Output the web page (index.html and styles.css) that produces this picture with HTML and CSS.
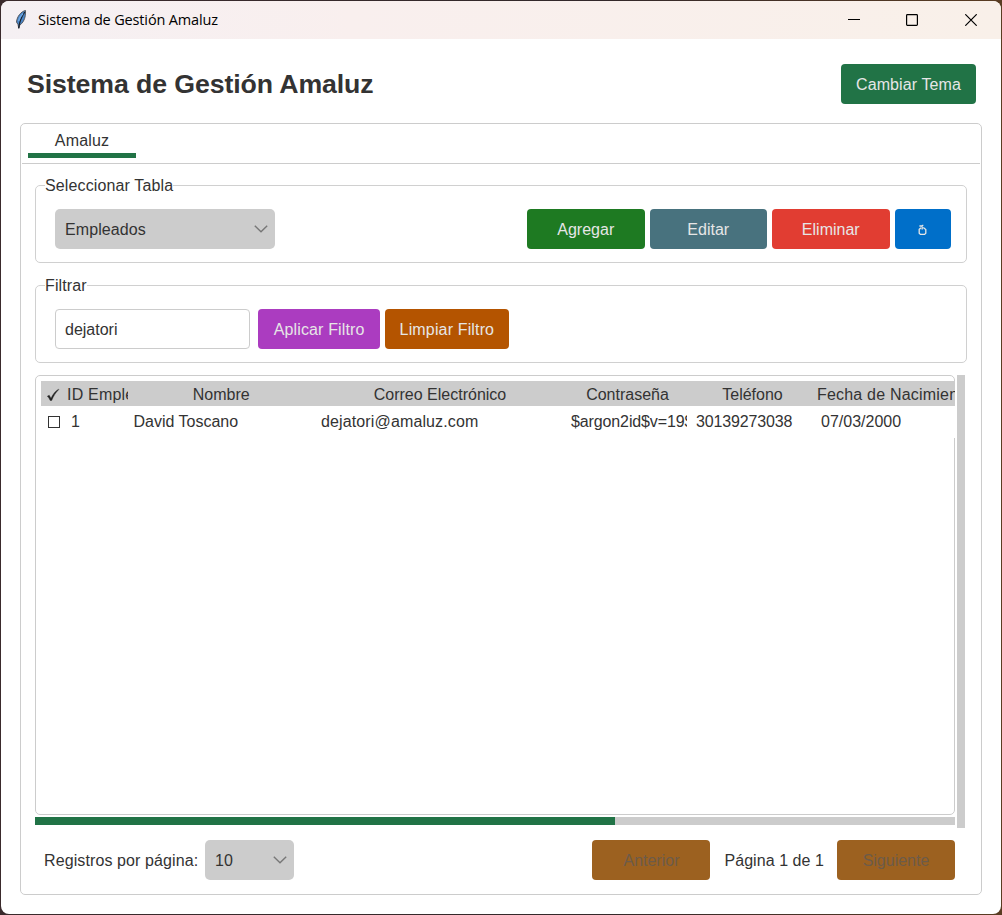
FILE: index.html
```html
<!DOCTYPE html>
<html lang="es">
<head>
<meta charset="utf-8">
<title>Sistema de Gestión Amaluz</title>
<link rel="stylesheet" href="styles.css">
</head>
<body>
<div class="window">
  <header class="titlebar">
    <svg class="feather" width="14" height="22" viewBox="0 0 14 22">
      <path d="M11.500 1.500C7 2.500 3 7.500 2.500 13L4 15.500L4.800 19.500L5.800 16C8.500 14.500 10.800 10.500 11.300 6.500Z" fill="#4a86c8" stroke="#55585f" stroke-width="1"/>
      <path d="M10.800 3C8 7 5.500 12 4.700 19" fill="none" stroke="#17202c" stroke-width="1.300"/>
      <path d="M9 4.500C7 6.500 5.300 9 4.500 12" fill="none" stroke="#6fa8e4" stroke-width="1.400"/>
    </svg>
    <span class="caption">Sistema de Gestión Amaluz</span>
    <div class="controls">
      <svg width="12" height="12" viewBox="0 0 12 12"><path d="M0 5.500H12"/></svg>
      <svg width="12" height="12" viewBox="0 0 12 12"><rect x=".6" y=".6" width="10.800" height="10.800" rx=".8"/></svg>
      <svg width="12" height="12" viewBox="0 0 12 12"><path d="M.3 .3L11.700 11.700M11.700 .3L.3 11.700"/></svg>
    </div>
  </header>

  <div class="heading">
    <h1>Sistema de Gestión Amaluz</h1>
    <button class="btn theme">Cambiar Tema</button>
  </div>

  <main class="notebook">
    <nav class="tabs"><span class="tab">Amaluz</span></nav>

    <section class="group">
      <span class="legend">Seleccionar Tabla</span>
      <div class="select table-select"><span>Empleados</span>
        <svg width="14" height="8" viewBox="0 0 14 8"><path d="M.8 .8L7 6.800L13.200 .8"/></svg>
      </div>
      <div class="actions">
        <button class="btn add">Agregar</button>
        <button class="btn edit">Editar</button>
        <button class="btn delete">Eliminar</button>
        <button class="btn refresh" aria-label="Recargar">
          <svg width="9" height="12" viewBox="0 0 9 12"><path d="M5.300 3.400L7.800 5.600V9.200L6.600 10.400H2.400L1.200 9.200V5.400L3 3.800M1.400 2H4.200V5.400M3.600 2L5.300 1.200"/></svg>
        </button>
      </div>
    </section>

    <section class="group filter">
      <span class="legend">Filtrar</span>
      <input class="search" type="text" value="dejatori">
      <button class="btn apply">Aplicar Filtro</button>
      <button class="btn clear">Limpiar Filtro</button>
    </section>

    <div class="table-area">
      <div class="tree">
        <div class="row head">
          <span class="check"><svg width="14" height="14" viewBox="0 0 14 14"><path d="M1.300 8.200L3.200 7.200L5 10.200C7 6 9.500 3 12.500 1.200L12.800 1.600C9.800 4.500 7.500 8 5.700 12.500H4.200C3.400 10.600 2.500 9.200 1.300 8.200Z" fill="#222" stroke="#222" stroke-width=".4"/></svg></span>
          <span class="clip-left">ID Empleado</span><span>Nombre</span><span>Correo Electrónico</span><span>Contraseña</span><span>Teléfono</span><span class="clip-left birth">Fecha de Nacimiento</span>
        </div>
        <div class="row body">
          <span class="check"><i class="box"></i></span>
          <span>1</span><span>David Toscano</span><span class="mail">dejatori@amaluz.com</span><span class="hash">$argon2id$v=19$</span><span class="phone">30139273038</span><span>07/03/2000</span>
        </div>
      </div>
      <div class="vscroll"></div>
      <div class="hscroll"><div class="thumb"></div></div>
    </div>

    <footer class="pager">
      <span class="per-page">Registros por página:</span>
      <div class="select size-select"><span>10</span>
        <svg width="14" height="8" viewBox="0 0 14 8"><path d="M.8 .8L7 6.800L13.200 .8"/></svg>
      </div>
      <button class="btn page" disabled>Anterior</button>
      <span class="page-no">Página 1 de 1</span>
      <button class="btn page" disabled>Siguiente</button>
    </footer>
  </main>
</div>
</body>
</html>
```
FILE: styles.css
```css
* { box-sizing: border-box; }
body {
  margin: 0;
  width: 1002px;
  height: 915px;
  padding: 1px;
  overflow: hidden;
  background: linear-gradient(90deg, #3a2a2c, #33282a 60%, #5a3c22);
  font: 16px/20px "Liberation Sans", Arial, sans-serif;
  color: #333;
}
.window {
  height: 913px;
  background: #fff;
  border-radius: 8px;
  overflow: hidden;
  display: flex;
  flex-direction: column;
}
.titlebar {
  height: 38px;
  flex: none;
  display: flex;
  align-items: center;
  padding: 0 24px 0 13px;
  background: linear-gradient(90deg, #f5f0f3, #f9efee 35%, #f9f0e9);
}
.feather { margin-top: -1px; }
.caption {
  margin-left: 10px;
  font: 14.500px/20px "Open Sans", "Noto Sans", sans-serif;
  letter-spacing: -.15px;
  color: #000;
}
.controls { margin-left: auto; display: flex; gap: 47px; }
.controls svg { fill: none; stroke: #000; stroke-width: 1.200; }
.controls svg:first-child { margin-right: -1px; }
.heading {
  display: flex;
  justify-content: space-between;
  align-items: center;
  padding: 25px 25px 19px 26px;
}
h1 { margin: 0; font-size: 26.700px; line-height: 40px; letter-spacing: -.1px; }
.btn {
  height: 40px;
  width: 117.500px;
  border: 0;
  padding: 2px 0 0;
  border-radius: 4px;
  font: inherit;
  color: #e6e6e6;
  display: flex;
  align-items: center;
  justify-content: center;
}
.theme { width: 135px; background: #217346; letter-spacing: .1px; }
.add { background: #1e7a22; }
.edit { background: #48727e; }
.delete { background: #e13d32; }
.refresh { width: 56.500px; background: #006fc9; }
.refresh svg { fill: none; stroke: #e6e6e6; stroke-width: 1.300; }
.apply { width: 121.500px; margin-left: 8.400px; background: #ab3cc0; letter-spacing: .15px; }
.clear { width: 124px; margin-left: 5px; background: #b45400; letter-spacing: .15px; }
.notebook {
  margin: 0 19px;
  height: 772px;
  border: 1px solid #ccc;
  border-radius: 5px;
}
.tabs {
  height: 40px;
  margin: 0 1px;
  padding-left: 6px;
  border-bottom: 1px solid #ccc;
}
.tab {
  display: block;
  width: 108px;
  height: 34px;
  padding-top: 7px;
  text-align: center;
  letter-spacing: .15px;
  border-bottom: 5px solid #217346;
}
.group {
  position: relative;
  display: flex;
  align-items: center;
  height: 78px;
  margin: 21px 14px 0;
  padding: 9px 15px 0 19px;
  border: 1px solid #d0d0d0;
  border-radius: 5px;
}
.filter { margin-top: 22px; }
.legend {
  position: absolute;
  left: 9px;
  top: -10px;
  background: #fff;
  letter-spacing: .13px;
}
.select {
  height: 40px;
  display: flex;
  align-items: center;
  justify-content: space-between;
  padding: 0 7px 0 10px;
  border-radius: 5px;
  background: #ccc;
}
.select span { padding-top: 2px; }
.select svg { fill: none; stroke: #777; stroke-width: 1.400; }
.table-select { width: 220px; letter-spacing: .1px; }
.actions { margin-left: auto; display: flex; gap: 5px; }
.search {
  width: 195px;
  height: 40px;
  padding: 2px 9px 0;
  border: 1px solid #ccc;
  border-radius: 4px;
  font: inherit;
  color: #333;
}
.table-area {
  display: grid;
  grid-template: 440px 8px / 920px 8px;
  column-gap: 2px;
  row-gap: 2px;
  margin: 12px 0 0 14px;
}
.tree {
  border: 1px solid #ccc;
  border-radius: 5px;
  padding: 5px 0 0 5px;
}
.row {
  display: grid;
  grid-template-columns: 24px 62.500px 187.500px 250px 125px 125px 140px;
  width: 914px;
  overflow: hidden;
  background: #fff;
}
.row span { overflow: hidden; white-space: nowrap; }
.head { height: 25px; line-height: 28px; background: #ccc; text-align: center; }
.head .clip-left { text-align: left; padding-left: 2px; letter-spacing: .2px; }
.head .check { padding: 7px 0 0 5px; line-height: 0; text-align: left; }
.head .birth { letter-spacing: .2px; }
.body { height: 32px; line-height: 32px; }
.body span { padding-left: 6px; }
.body .mail { letter-spacing: .13px; }
.body .phone { letter-spacing: -.15px; }
.row .hash { margin-right: 3.500px; letter-spacing: -.12px; }
.box {
  display: block;
  width: 12px;
  height: 12px;
  margin: 10px 0 0 1px;
  border: 1px solid #333;
}
.vscroll { background: #ccc; grid-row: 1 / 3; grid-column: 2; height: 453px; }
.hscroll { background: #ccc; }
.thumb { width: 580px; height: 8px; background: #217346; }
.pager {
  display: flex;
  align-items: center;
  margin: 15px 26px 0 23px;
}
.per-page { width: 161px; padding-top: 2px; letter-spacing: .1px; }
.size-select { width: 89px; margin-right: auto; }
.page { width: 118px; background: #9c6120; color: #6c5b49; }
.page-no { margin: 0 13px 0 14px; padding-top: 2px; letter-spacing: .06px; }
```
